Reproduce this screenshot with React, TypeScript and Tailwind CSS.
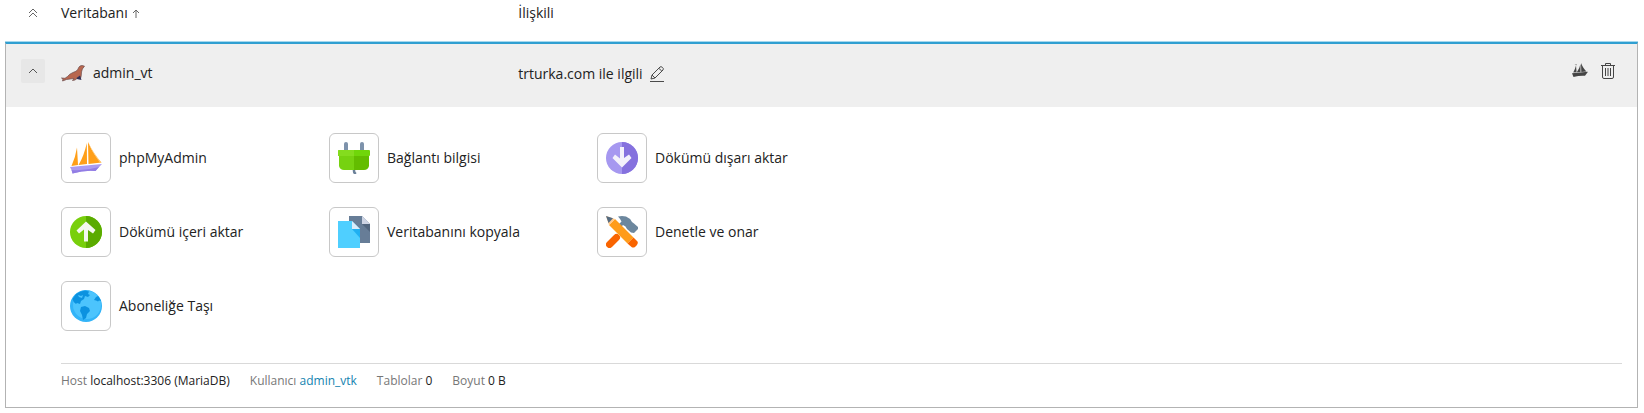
import React from "react";

const PhpMyAdminIcon = () => (
  <svg width="32" height="32" viewBox="0 0 32 32" aria-hidden="true">
    <path d="M7 5.500 L8 23 L1.500 24 Q5.500 15 7 5.500Z" fill="#ff9f19" />
    <path d="M16.800 1 L17 22 L8.500 23 Q14 14 16.800 1Z" fill="#ff9f19" />
    <path d="M18 0 Q24 14 31.500 20.500 L18.500 21.900Z" fill="#ff9f19" />
    <path d="M18 0 Q22 10 30 20.700 L31.500 20.500 Q24 12 18 0Z" fill="#ffc873" />
    <path d="M0 25 L32 22 Q28 26 25.500 29 Q14 28 2.500 31.500 L2 29 Q1 27 0 25Z" fill="#ab9bf2" />
    <path d="M1.500 28 Q16 29 29 25 L25.500 29 Q14 28 2.500 31.500Z" fill="#927de4" />
  </svg>
);

const PlugIcon = () => (
  <svg width="32" height="32" viewBox="0 0 32 32" aria-hidden="true">
    <path d="M16 27v2q0 2 2 3" stroke="#6b8199" strokeWidth="2.500" fill="none" />
    <rect x="6" y="0" width="4" height="10" rx="2" fill="#7d92ab" />
    <rect x="22" y="0" width="4" height="10" rx="2" fill="#7d92ab" />
    <path d="M1 13h15v15H6q-4 0-5-4z" fill="#76d210" />
    <path d="M16 13h15v11q-1 4-5 4H16z" fill="#63bd00" />
    <rect x="0" y="8" width="32" height="6" rx="1" fill="#70d60a" />
    <path d="M1 8h15v6H0V9z" fill="#84dc1e" />
  </svg>
);

const ExportIcon = () => (
  <svg width="32" height="32" viewBox="0 0 32 32" aria-hidden="true">
    <circle cx="16" cy="16" r="16" fill="#a698f0" />
    <path d="M16 0a16 16 0 0 1 0 32z" fill="#8571de" />
    <path d="M14 5h4v11l5-3.500 2.500 3.500L16 25.500 6.500 16 9 12.500l5 4z" fill="#f3f1fb" />
  </svg>
);

const ImportIcon = () => (
  <svg width="32" height="32" viewBox="0 0 32 32" aria-hidden="true">
    <circle cx="16" cy="16" r="16" fill="#78cf0c" />
    <path d="M16 0a16 16 0 0 1 0 32z" fill="#5aab00" />
    <path d="M14 25.500h4V14l5 3.500 2.500-3.500L16 5.500 6.500 14.500 9 17.500l5-4z" fill="#f4f8ee" />
  </svg>
);

const CopyIcon = () => (
  <svg width="32" height="32" viewBox="0 0 32 32" aria-hidden="true">
    <path d="M11 0h13l8 8v19H11z" fill="#677d97" />
    <path d="M24 8l8 8V8z" fill="#52667f" />
    <path d="M24 0v8h8z" fill="#cdd4e4" />
    <path d="M0 5h14l8 8v19H0z" fill="#4fcfff" />
    <path d="M14 13l8 9v-9z" fill="#1fb0f2" />
    <path d="M14 5v8h8z" fill="#d9ecfb" />
  </svg>
);

const RepairIcon = () => (
  <svg width="32" height="32" viewBox="0 0 32 32" aria-hidden="true">
    <path d="M12 .500Q16-.500 20 .500q4 1.500 6 5.500l2 1.500 4 3.500v2l-4 4-3-.500-4-3.500q-1-3-4-4l-4 4-2-3 4.500-4.500Q14 2.500 12 .500z" fill="#6c879e" />
    <path d="M3.500 28.500l7-7" stroke="#f96400" strokeWidth="7" strokeLinecap="round" />
    <path d="M3 9l6-6 18.500 18.500-6 6z" fill="#ff9c1a" />
    <path d="M21.500 27.500l6-6 4 4q1 2-1 4l-1.500 1.500q-2 1-3.500 0z" fill="#f96400" />
    <path d="M3 9l6-6L0 0z" fill="#ffc88a" />
    <path d="M0 0l7 2.300-4.500 4.700z" fill="#566b80" />
  </svg>
);

const GlobeIcon = () => (
  <svg width="32" height="32" viewBox="0 0 32 32" aria-hidden="true">
    <circle cx="16" cy="16" r="16" fill="#33b4f8" />
    <circle cx="17" cy="15" r="14" fill="#4cc4fd" />
    <path d="M6 4Q10 1 15 .500l4 1-1 2.500 2 1-2 2-3-1-1 3-3 2-1 3-3-1-1 1Q3 12 2.500 9z" fill="#0c92e0" />
    <path d="M11 17l4-1 4 2 1 3-3 3-1 4-3 2-1-5-2-4z" fill="#0c92e0" />
    <path d="M24 10l2-3 2-1q2 2 3 5l-2-.500-1 1-2-1z" fill="#0c92e0" />
    <path d="M8 5l3 1 2-1-1 3-3-1z" fill="#4cc4fd" />
  </svg>
);

const SealIcon = () => (
  <svg width="24" height="17" viewBox="0 0 24 17" aria-hidden="true">
    <path
      d="M23.500 1.200Q21-.200 19 1 17.500 2.200 16.800 4.500 15.500 6.500 12 7.500 8.500 8.800 6.500 11.500L4 13.300.500 13l1.500 1.300-.500 1.700 4-1.500Q9 14 13 13.500l-1.500 2 2.500-.500 2-1.500h3.500Q20.500 11 20.500 7 20.800 3.800 23.500 1.200z"
      fill="#b8674f"
      stroke="#6b4c4c"
      strokeWidth="0.700"
      strokeLinejoin="round"
    />
    <path d="M15.500 13l3.500-2.500 1 3 .500 1.500-2.500-.500-2-.500z" fill="#353258" />
  </svg>
);

const PencilIcon = () => (
  <svg width="14" height="16" viewBox="0 0 14 16" fill="none" stroke="#4a4a4a" aria-hidden="true">
    <path d="M1 13l1-4 8-8q1-.800 2.300.300Q14 2.500 13 4L5 12zM9 2.500L11.800 5M2 9l3 3" />
    <path d="M0 15.500h14" />
  </svg>
);

const BoatIcon = () => (
  <svg width="16" height="14" viewBox="0 0 16 14" fill="#454545" aria-hidden="true">
    <path d="M4 2.500L4.600 9.200 1.200 9.600Q3.200 6 4 2.500zM8.500 1v8L4.800 9.300Q7.800 5 8.500 1zM9 0q2.500 6 5.500 8.500L9.300 9zM0 10.200l16-1.400-3 4Q7 12.500 1.500 14z" />
    <path d="M2.500 1.500L5 1l-.500 1.500z" fill="#999" />
  </svg>
);

const TrashIcon = () => (
  <svg width="14" height="16" viewBox="0 0 14 16" fill="none" stroke="#454545" aria-hidden="true">
    <path d="M0 2.500h14M4.500 2.500v-2h5v2M1.500 2.500V14q0 1.500 1.500 1.500h8q1.500 0 1.500-1.500V2.500M4.500 5v8M7 5v8M9.500 5v8" />
  </svg>
);

const tools = [
  { label: "phpMyAdmin", icon: <PhpMyAdminIcon /> },
  { label: "Bağlantı bilgisi", icon: <PlugIcon /> },
  { label: "Dökümü dışarı aktar", icon: <ExportIcon /> },
  { label: "Dökümü içeri aktar", icon: <ImportIcon /> },
  { label: "Veritabanını kopyala", icon: <CopyIcon /> },
  { label: "Denetle ve onar", icon: <RepairIcon /> },
  { label: "Aboneliğe Taşı", icon: <GlobeIcon /> },
];

export default function App() {
  return (
    <main className="pl-[5px] pr-[6px] font-['Open_Sans',sans-serif] text-sm text-[#222]">
      <table className="w-full table-fixed border-separate border-spacing-0 text-left">
        <thead>
          <tr className="h-[42px] align-top">
            <th className="w-14 border-b border-[#a5d8ee] pl-5 pt-2">
              <button type="button" aria-label="Tümünü daralt" className="block">
                <svg width="16" height="10" viewBox="0 0 16 10" fill="none" stroke="#666" aria-hidden="true">
                  <path d="M4 5l4-4 4 4M4 9l4-4 4 4" />
                </svg>
              </button>
            </th>
            <th className="w-[28%] border-b border-[#a5d8ee] pt-[3px] font-normal">
              <button type="button" className="flex items-center gap-1">
                Veritabanı
                <svg width="8" height="9" viewBox="0 0 8 9" fill="none" stroke="#666" aria-hidden="true">
                  <path d="M4 9V1M1 4l3-3 3 3" />
                </svg>
              </button>
            </th>
            <th className="border-b border-[#a5d8ee] pt-[3px] font-normal">İlişkili</th>
            <th className="w-24 border-b border-[#a5d8ee]" aria-label="İşlemler"></th>
          </tr>
        </thead>
        <tbody>
          <tr className="h-[65px] bg-[#efefef] align-top">
            <td className="border-l border-t-2 border-l-[#b3b3b3] border-t-[#309fd1] pl-[15px] pt-[15px]">
              <button
                type="button"
                aria-label="Daralt"
                className="flex size-6 items-center justify-center rounded-xs bg-[#e7e7e7]"
              >
                <svg width="10" height="6" viewBox="0 0 10 6" fill="none" stroke="#555" aria-hidden="true">
                  <path d="M1 5l4-4 4 4" />
                </svg>
              </button>
            </td>
            <td className="border-t-2 border-[#309fd1] pt-[19px]">
              <div className="flex items-center gap-2">
                <SealIcon />
                admin_vt
              </div>
            </td>
            <td className="border-t-2 border-[#309fd1] pt-5">
              <div className="flex items-center gap-[7px]">
                trturka.com ile ilgili
                <button type="button" aria-label="Düzenle">
                  <PencilIcon />
                </button>
              </div>
            </td>
            <td className="border-r border-t-2 border-r-[#b3b3b3] border-t-[#309fd1] pr-[22px] pt-[19px]">
              <div className="flex items-start justify-end gap-[13px]">
                <button type="button" aria-label="phpMyAdmin">
                  <BoatIcon />
                </button>
                <button type="button" aria-label="Kaldır">
                  <TrashIcon />
                </button>
              </div>
            </td>
          </tr>
          <tr>
            <td colSpan={4} className="border-x border-b border-[#b3b3b3] pl-[55px] pr-[15px] pt-[26px]">
              <div className="grid grid-cols-[repeat(3,268px)] gap-y-6">
                {tools.map((tool) => (
                  <a key={tool.label} href="#" className="flex items-center gap-2">
                    <span className="flex size-[50px] items-center justify-center rounded-md border border-[#c8c8c8]">
                      {tool.icon}
                    </span>
                    {tool.label}
                  </a>
                ))}
              </div>

              {/* Connection summary */}
              <dl className="mt-8 flex gap-5 border-t border-[#d9d9d9] pb-[17px] pt-2 text-xs leading-[18px]">
                <div>
                  <dt className="inline text-[#777]">Host</dt>{" "}
                  <dd className="inline">localhost:3306 (MariaDB)</dd>
                </div>
                <div>
                  <dt className="inline text-[#777]">Kullanıcı</dt>{" "}
                  <dd className="inline">
                    <a href="#" className="text-[#1483b0]">admin_vtk</a>
                  </dd>
                </div>
                <div>
                  <dt className="inline text-[#777]">Tablolar</dt>{" "}
                  <dd className="inline">0</dd>
                </div>
                <div>
                  <dt className="inline text-[#777]">Boyut</dt>{" "}
                  <dd className="inline">0 B</dd>
                </div>
              </dl>
            </td>
          </tr>
        </tbody>
      </table>
    </main>
  );
}
